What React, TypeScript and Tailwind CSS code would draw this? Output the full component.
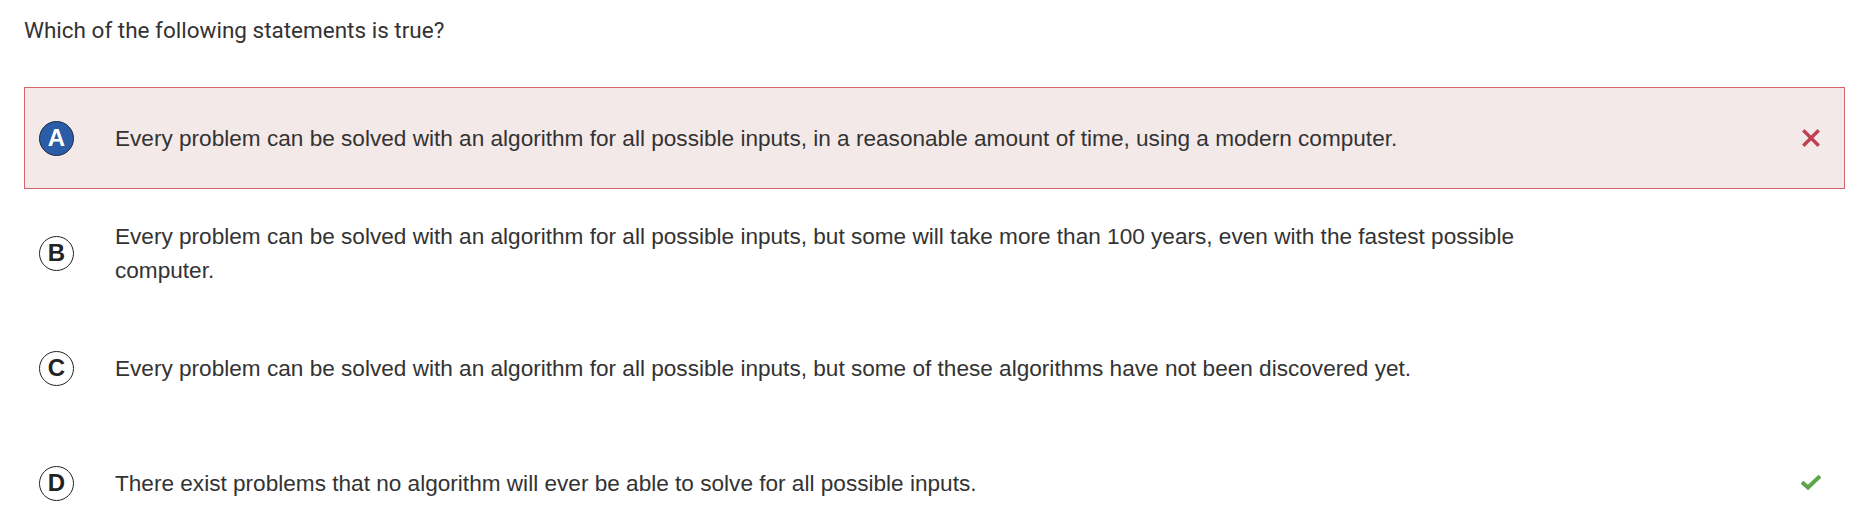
import React from "react";

type Option = {
  letter: string;
  text: string;
  selected?: boolean;
  status?: "wrong" | "right";
};

const options: Option[] = [
  {
    letter: "A",
    text: "Every problem can be solved with an algorithm for all possible inputs, in a reasonable amount of time, using a modern computer.",
    selected: true,
    status: "wrong",
  },
  {
    letter: "B",
    text: "Every problem can be solved with an algorithm for all possible inputs, but some will take more than 100 years, even with the fastest possible computer.",
  },
  {
    letter: "C",
    text: "Every problem can be solved with an algorithm for all possible inputs, but some of these algorithms have not been discovered yet.",
  },
  {
    letter: "D",
    text: "There exist problems that no algorithm will ever be able to solve for all possible inputs.",
    status: "right",
  },
];

function CrossIcon() {
  return (
    <svg width="18" height="18" viewBox="0 0 18 18" className="text-[#c0404f]">
      <path d="M2.5 2.5 L15.5 15.5 M15.5 2.5 L2.5 15.5" stroke="currentColor" strokeWidth="3.4" strokeLinecap="square" />
    </svg>
  );
}

function CheckIcon() {
  return (
    <svg width="20" height="16" viewBox="0 0 20 16" className="text-[#5ea64a]">
      <path d="M2.5 8.5 L7 12.5 L17.5 2.5" stroke="currentColor" strokeWidth="4" fill="none" strokeLinecap="square" />
    </svg>
  );
}

function Badge({ letter, selected }: { letter: string; selected?: boolean }) {
  return (
    <div
      className={
        selected
          ? "w-[35px] h-[35px] shrink-0 rounded-full bg-[#2a5ca8] border border-[#1c2a40] text-white flex items-center justify-center text-[24px] font-bold font-['Liberation_Sans',Arial,sans-serif]"
          : "w-[35px] h-[35px] shrink-0 rounded-full bg-white border border-[#222] text-[#222] flex items-center justify-center text-[24px] font-bold font-['Liberation_Sans',Arial,sans-serif]"
      }
    >
      {letter}
    </div>
  );
}

export default function App() {
  return (
    <div className="bg-white w-[1862px] h-[532px] overflow-hidden pl-6 pr-[17px]">
      <h1 className="pt-[15px] h-[87px] text-[22.5px] leading-[30px] text-[#333] font-['Roboto',sans-serif]">
        Which of the following statements is true?
      </h1>
      <div className="flex flex-col gap-[13px]">
        {options.map((o) => (
          <div
            key={o.letter}
            className={
              o.selected
                ? "flex items-center h-[102px] border border-[#d8646d] bg-[#f4e9e9] pl-[14px] pr-[23px]"
                : "flex items-center h-[102px] border border-transparent pl-[14px] pr-[23px]"
            }
          >
            <Badge letter={o.letter} selected={o.selected} />
            <p className="ml-[41px] pt-[2px] max-w-[1420px] flex-1 text-[22.6px] leading-[34px] text-[#333] font-['Liberation_Sans',Arial,sans-serif]">
              {o.text}
            </p>
            <div className="ml-auto w-[20px] flex justify-center">
              {o.status === "wrong" && <CrossIcon />}
              {o.status === "right" && <CheckIcon />}
            </div>
          </div>
        ))}
      </div>
    </div>
  );
}
